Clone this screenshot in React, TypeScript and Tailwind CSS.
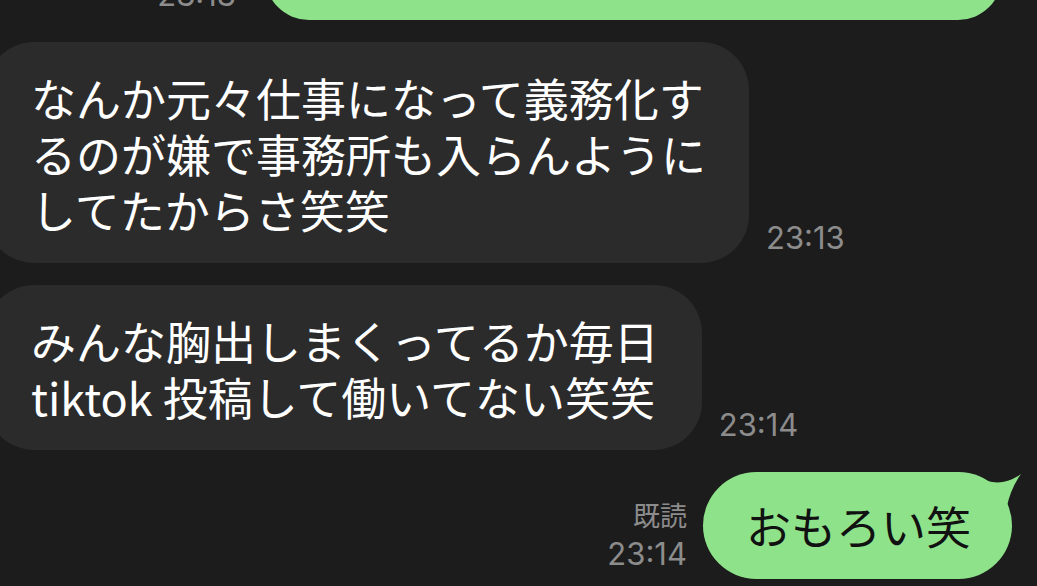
const jp = "font-['Noto_Sans_CJK_JP',sans-serif]";
const meta = "font-['Inter','Noto_Sans_CJK_JP',sans-serif] text-[31px] leading-[37px] text-[#8c8c8c]";

function GrayBubble({ lines, time }: { lines: string[]; time: string }) {
  return (
    <div className="flex items-end gap-[17px]">
      <div className={`ml-[-14px] rounded-[48px] bg-[#2b2b2b] pb-[25px] pl-[45px] pr-[43px] pt-[28px] text-[45px] leading-[56px] text-white ${jp}`}>
        {lines.map((line) => (
          <div key={line} className="whitespace-nowrap">
            {line}
          </div>
        ))}
      </div>
      <div className={`mb-[7px] ${meta}`}>{time}</div>
    </div>
  );
}

export default function App() {
  return (
    <div className="h-[586px] w-[1037px] overflow-hidden bg-[#1c1c1c]">
      <div className="flex flex-col gap-[22px]">
        <div className="mt-[-100px] flex items-end justify-end gap-[29px] pr-[35px]">
          <div className={`mb-[7px] text-right ${meta}`}>
            <div className="text-[27px]">既読</div>
            <div>23:13</div>
          </div>
          <div className="h-[120px] w-[737px] rounded-[44px] bg-[#8ee38a]" />
        </div>

        <GrayBubble
          lines={["なんか元々仕事になって義務化す", "るのが嫌で事務所も入らんように", "してたからさ笑笑"]}
          time="23:13"
        />
        <GrayBubble lines={["みんな胸出しまくってるか毎日", "tiktok 投稿して働いてない笑笑"]} time="23:14" />

        <div className="flex items-end justify-end gap-[16px] pr-[25px]">
          <div className={`mb-[7px] text-right ${meta}`}>
            <div className="text-[27px]">既読</div>
            <div>23:14</div>
          </div>
          <div className={`relative rounded-[54px] bg-[#8ee38a] pb-[25px] pl-[43px] pr-[41px] pt-[26px] text-[45px] leading-[56px] text-[#111] ${jp}`}>
            <svg className="absolute right-[-23px] top-0 overflow-visible" width="50" height="40" viewBox="0 0 50 40">
              <path d="M2 9 Q20 14 36 2 Q26 16 22 34 L0 32 Z" fill="#8ee38a" />
            </svg>
            <span className="relative">おもろい笑</span>
          </div>
        </div>
      </div>
    </div>
  );
}
